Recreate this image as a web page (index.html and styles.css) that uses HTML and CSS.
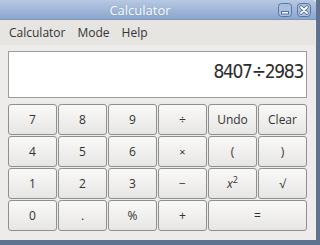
FILE: index.html
```html
<!DOCTYPE html>
<html lang="en">
<head>
    <meta charset="UTF-8">
    <title>Calculator</title>
    <link rel="stylesheet" href="styles.css">
</head>
<body>

    <div class="window">
        <!-- Title Bar -->
        <div class="titlebar">
            <div class="title">Calculator</div>
            <div class="wm-buttons">
                <svg class="wm-btn" width="14" height="14" viewBox="0 0 14 14">
                    <rect x="0.5" y="0.5" width="13" height="13" rx="3" fill="#a9bfdf" stroke="#5a75a3"/>
                    <rect x="3.5" y="8.5" width="7" height="2.5" fill="#ffffff" stroke="#56709c" stroke-width="1"/>
                </svg>
                <svg class="wm-btn" width="14" height="14" viewBox="0 0 14 14">
                    <rect x="0.5" y="0.5" width="13" height="13" rx="3" fill="#a9bfdf" stroke="#5a75a3"/>
                    <path d="M4 4 L10 10 M10 4 L4 10" stroke="#56709c" stroke-width="3.6" stroke-linecap="round"/>
                    <path d="M4 4 L10 10 M10 4 L4 10" stroke="#ffffff" stroke-width="1.8" stroke-linecap="round"/>
                </svg>
            </div>
        </div>

        <!-- Menu Bar -->
        <div class="menubar">
            <span class="menu-item">Calculator</span>
            <span class="menu-item">Mode</span>
            <span class="menu-item">Help</span>
        </div>

        <div class="content">
            <!-- Display -->
            <div class="display">8407÷2983</div>

            <!-- Keypad -->
            <div class="keypad">
                <button class="key">7</button>
                <button class="key">8</button>
                <button class="key">9</button>
                <button class="key">÷</button>
                <button class="key">Undo</button>
                <button class="key">Clear</button>

                <button class="key">4</button>
                <button class="key">5</button>
                <button class="key">6</button>
                <button class="key small">×</button>
                <button class="key">(</button>
                <button class="key">)</button>

                <button class="key">1</button>
                <button class="key">2</button>
                <button class="key">3</button>
                <button class="key">−</button>
                <button class="key"><i>x</i><sup>2</sup></button>
                <button class="key">√</button>

                <button class="key">0</button>
                <button class="key">.</button>
                <button class="key">%</button>
                <button class="key">+</button>
                <button class="key wide">=</button>
            </div>
        </div>
    </div>

</body>
</html>
```

FILE: styles.css
```css
/* Desktop behind the window */
body {
    margin: 0;
    width: 320px;
    height: 245px;
    background: #5f7290;
    font-family: 'Open Sans', 'DejaVu Sans', sans-serif;
    overflow: hidden;
}

/* Window */
.window {
    width: 316px;
    height: 240px;
    background: #edeceb;
    display: flex;
    flex-direction: column;
}

/* Title Bar */
.titlebar {
    height: 20px;
    display: flex;
    align-items: center;
    background: linear-gradient(180deg, #b7c9e3, #8ba6cd);
    border-top-right-radius: 4px;
    box-sizing: border-box;
    border-bottom: 1px solid #7d96bd;
}

.title {
    flex: 1;
    text-align: center;
    font-size: 13px;
    color: #ffffff;
    text-shadow: 0 0 1px rgba(90, 120, 170, 0.6);
    padding-left: 2px;
}

.wm-buttons {
    display: flex;
    gap: 5px;
    padding-right: 5px;
}

.wm-btn {
    display: block;
}

/* Menu Bar */
.menubar {
    height: 25px;
    display: flex;
    align-items: center;
    gap: 12px;
    padding-left: 9px;
    background: #e6e5e2;
    font-size: 12px;
    color: #343434;
    margin-right: 1px;
}

/* Content */
.content {
    padding: 6px 9px 9px 8px;
    display: flex;
    flex-direction: column;
    gap: 6px;
}

/* Display */
.display {
    height: 47px;
    box-sizing: border-box;
    border: 1px solid #9c9c9c;
    background: #ffffff;
    text-align: right;
    font-family: 'DejaVu Sans Condensed', 'DejaVu Sans', sans-serif;
    font-stretch: condensed;
    font-size: 19px;
    letter-spacing: -1.3px;
    line-height: 22px;
    padding: 8px 3px 0 0;
    color: #2c2c2c;
}

/* Keypad */
.keypad {
    display: grid;
    grid-template-columns: repeat(6, 49px);
    grid-auto-rows: 31px;
    gap: 1px;
}

.key {
    border: 1px solid #8f8f8f;
    border-radius: 3px;
    background: linear-gradient(180deg, #f9f9f8, #e7e6e4);
    font-family: 'Open Sans', 'DejaVu Sans', sans-serif;
    font-size: 12px;
    color: #333333;
    padding: 0;
    cursor: pointer;
}

.key.small {
    font-size: 11px;
}

.key.wide {
    grid-column: span 2;
}

.key sup {
    font-size: 9px;
    line-height: 0;
}
```
